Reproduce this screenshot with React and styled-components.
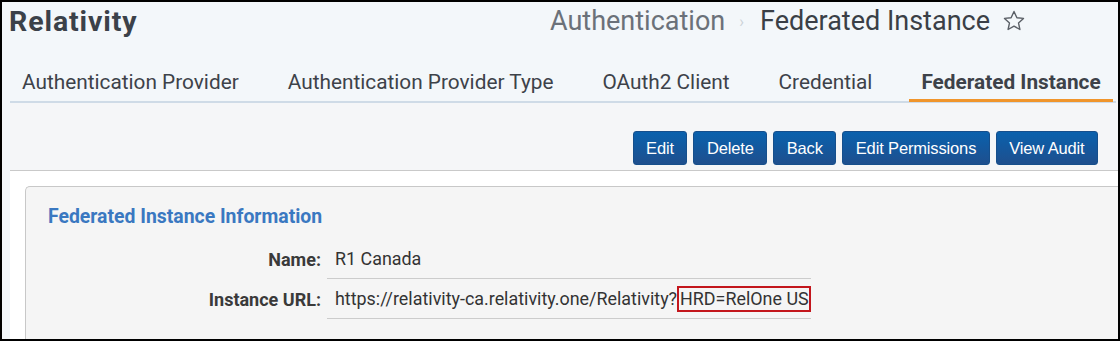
import styled, { createGlobalStyle } from "styled-components";

const GlobalStyle = createGlobalStyle`
  html, body {
    margin: 0;
    padding: 0;
    background: #ffffff;
  }
  * {
    box-sizing: border-box;
  }
`;

const Frame = styled.div`
  width: 1120px;
  height: 341px;
  border: 2px solid #000;
  background: #f3f7fa;
  overflow: hidden;
  font-family: Roboto, "Liberation Sans", sans-serif;
  display: flex;
  flex-direction: column;
`;

const Header = styled.div`
  display: flex;
  align-items: center;
  height: 38px;
  padding-left: 7px;
`;

const Brand = styled.div`
  font-size: 28.5px;
  font-weight: 700;
  color: #3b4149;
  letter-spacing: 0.9px;
`;

const Breadcrumb = styled.div`
  margin-left: auto;
  margin-right: 92px;
  display: flex;
  align-items: center;
  font-size: 27px;
`;

const Crumb = styled.span`
  color: ${(p) => (p.$current ? "#3a3f46" : "#6b7179")};
`;

const Sep = styled.span`
  color: #ccd2d8;
  font-size: 16px;
  margin: 0 16px 0 14px;
`;

const Star = styled.svg`
  margin-left: 12px;
  width: 24px;
  height: 24px;
`;

const TabBar = styled.div`
  display: flex;
  gap: 25px;
  margin: 24px 2px 0 8px;
  border-bottom: 2px solid #cfdbe7;
`;

const Tab = styled.div`
  padding: 0 12px;
  height: 38px;
  display: flex;
  align-items: center;
  white-space: nowrap;
  font-size: 20.8px;
  color: #3d4249;
  font-weight: ${(p) => (p.$active ? 700 : 400)};
  border-bottom: 3px solid ${(p) => (p.$active ? "#f0952c" : "transparent")};
  margin-bottom: -1px;
`;

const Content = styled.div`
  flex: 1;
  margin-left: 8px;
  background: #ffffff;
  display: flex;
  flex-direction: column;
`;

const Toolbar = styled.div`
  display: flex;
  justify-content: flex-end;
  gap: 6px;
  padding: 28px 20px 5px 0;
  background: #f5f6f8;
  border-bottom: 1px solid #c9c9c9;
`;

const Button = styled.button`
  height: 34px;
  padding: 0 12.5px;
  border: 1px solid #164f8c;
  border-radius: 3px;
  background: linear-gradient(#0a61ad, #1e4f8e);
  color: #ffffff;
  font-family: "Liberation Sans", Arial, sans-serif;
  font-size: 16.5px;
  letter-spacing: -0.15px;
`;

const Body = styled.div`
  padding: 15px 0 0 15px;
  flex: 1;
`;

const Panel = styled.div`
  height: 100%;
  background: #f5f5f5;
  border: 1px solid #c8c8c8;
  border-right: none;
  border-bottom: none;
  border-radius: 5px 0 0 0;
  padding: 18px 0 0 22px;
`;

const PanelTitle = styled.div`
  font-size: 19.4px;
  font-weight: 700;
  color: #3a78c1;
  line-height: 24px;
  margin-bottom: 10px;
`;

const Fields = styled.div`
  display: inline-grid;
  grid-template-columns: 273px auto;
  column-gap: 6px;
`;

const Label = styled.div`
  height: 40px;
  display: flex;
  align-items: center;
  justify-content: flex-end;
  font-size: 18px;
  font-weight: 700;
  color: #3a3a3a;
`;

const Value = styled.div`
  height: 40px;
  display: flex;
  align-items: center;
  padding-left: 8px;
  font-size: 17.9px;
  color: #333333;
  border-bottom: 1px solid #cccccc;
`;

const Highlight = styled.span`
  border: 2px solid #c3161c;
  padding: 1px 0 1px 1px;
  line-height: 20px;
`;

export default function App() {
  return (
    <>
      <GlobalStyle />
      <Frame>
        <Header>
          <Brand>Relativity</Brand>
          <Breadcrumb>
            <Crumb>Authentication</Crumb>
            <Sep>›</Sep>
            <Crumb $current>Federated Instance</Crumb>
            <Star viewBox="0 0 24 24" fill="none" stroke="#5a5f66" strokeWidth="1.4" strokeLinejoin="round">
              <path d="M12 2.5l2.9 6.2 6.6.7-5 4.5 1.4 6.6L12 17.1l-5.9 3.4 1.4-6.6-5-4.5 6.6-.7z" />
            </Star>
          </Breadcrumb>
        </Header>
        <TabBar>
          <Tab>Authentication Provider</Tab>
          <Tab>Authentication Provider Type</Tab>
          <Tab>OAuth2 Client</Tab>
          <Tab>Credential</Tab>
          <Tab $active>Federated Instance</Tab>
        </TabBar>
        <Content>
          <Toolbar>
            <Button>Edit</Button>
            <Button>Delete</Button>
            <Button>Back</Button>
            <Button>Edit Permissions</Button>
            <Button>View Audit</Button>
          </Toolbar>
          <Body>
            <Panel>
              <PanelTitle>Federated Instance Information</PanelTitle>
              <Fields>
                <Label>Name:</Label>
                <Value>R1 Canada</Value>
                <Label>Instance URL:</Label>
                <Value>
                  https://relativity-ca.relativity.one/Relativity?
                  <Highlight>HRD=RelOne US</Highlight>
                </Value>
              </Fields>
            </Panel>
          </Body>
        </Content>
      </Frame>
    </>
  );
}
